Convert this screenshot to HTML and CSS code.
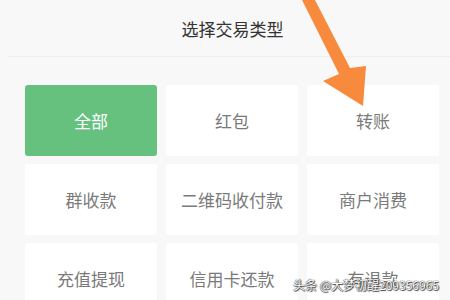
FILE: index.html
```
<!DOCTYPE html>
<html lang="zh-CN">
<head>
    <meta charset="UTF-8">
    <meta name="viewport" content="width=device-width, initial-scale=1.0">
    <title>选择交易类型</title>
    <link rel="stylesheet" href="styles.css">
</head>
<body>

    <div class="sheet">
        <div class="header">
            <h1 class="title">选择交易类型</h1>
        </div>

        <div class="types">
            <div class="type active">全部</div>
            <div class="type">红包</div>
            <div class="type">转账</div>
            <div class="type">群收款</div>
            <div class="type">二维码收付款</div>
            <div class="type">商户消费</div>
            <div class="type">充值提现</div>
            <div class="type">信用卡还款</div>
            <div class="type">有退款</div>
        </div>
    </div>

    <svg class="arrow" width="450" height="300" viewBox="0 0 450 300">
        <polygon fill="#f78a3c" points="302,0 315,0 350,68 366,66 363,106 323,81 339,74"/>
    </svg>

    <div class="watermark">头条 @大梦初醒209356965</div>

</body>
</html>
```

FILE: styles.css
```
body {
    margin: 0;
    width: 450px;
    height: 300px;
    overflow: hidden;
    background: #f8f8f8;
    font-family: "Noto Sans CJK SC", "Noto Sans", sans-serif;
    position: relative;
}

.header {
    margin-left: 8px;
    height: 57px;
    border-bottom: 1px solid #ededed;
    display: flex;
    align-items: center;
    justify-content: center;
    padding-left: 7px;
    box-sizing: border-box;
    padding-top: 1px;
}

.title {
    margin: 0;
    font-size: 17px;
    font-weight: normal;
    color: #333;
}

.types {
    display: grid;
    grid-template-columns: repeat(3, 132px);
    grid-auto-rows: 71px;
    gap: 8px 9px;
    padding: 28px 0 0 25px;
}

.type {
    background: #fff;
    border-radius: 3px;
    display: flex;
    align-items: center;
    justify-content: center;
    font-size: 17px;
    color: #7a7a7a;
}

.type.active {
    background: #66c17e;
    color: #fff;
}

.arrow {
    position: absolute;
    left: 0;
    top: 0;
}

.watermark {
    position: absolute;
    left: 293px;
    top: 276px;
    font-size: 12px;
    color: #fff;
    white-space: nowrap;
    text-shadow: 0 0 1px #333, 0 0 1px #333, 1px 1px 1px #444;
}
```
